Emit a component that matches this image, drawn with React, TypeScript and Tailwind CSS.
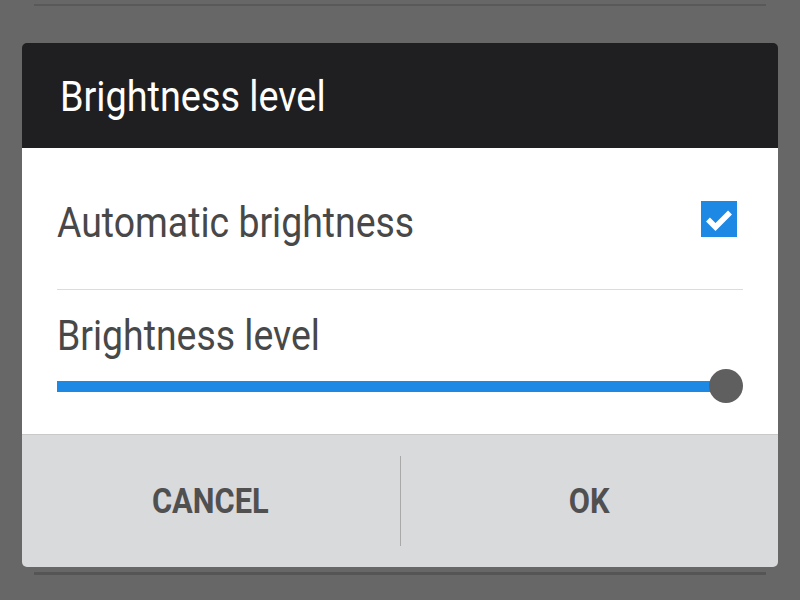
import React from "react";

export default function App() {
  return (
    <div className="w-[800px] h-[600px] bg-[#676767] relative overflow-hidden" style={{ fontFamily: "Roboto, 'Liberation Sans', sans-serif" }}>
      <div className="absolute left-[34px] right-[34px] top-[4px] h-[2px] bg-[#595959]" />
      <div className="absolute left-[34px] right-[34px] top-[572px] h-[3px] bg-[#555555]" />
      <div className="pt-[43px] px-[22px]">
        <div className="rounded-[5px] overflow-hidden flex flex-col">
          <div className="h-[105px] bg-[#1f1f21] flex items-center pl-[38px]">
            <span className="text-white text-[42px] leading-none origin-left scale-x-[0.9] inline-block pt-[2px]">Brightness level</span>
          </div>
          <div className="bg-white h-[286px] flex flex-col px-[35px]">
            <div className="h-[142px] flex items-center justify-between border-b border-[#dcdcdc]">
              <span className="text-[#484848] text-[43px] leading-none origin-left scale-x-[0.87] inline-block pt-[8px]">Automatic brightness</span>
              <div className="w-[36px] h-[36px] bg-[#1e88e5] mr-[6px]">
                <svg width="36" height="36" viewBox="0 0 36 36">
                  <path d="M7 18.5 L14.5 26 L29 11.5" stroke="white" strokeWidth="5.5" fill="none" strokeLinecap="butt" />
                </svg>
              </div>
            </div>
            <div className="pt-[24px]">
              <span className="text-[#484848] text-[43px] leading-none origin-left scale-x-[0.87] inline-block">Brightness level</span>
            </div>
            <div className="relative mt-[12px] h-[34px] flex items-center">
              <div className="h-[11px] bg-[#1e88e5] w-full mr-[18px]" />
              <div className="absolute right-[0px] top-0 w-[34px] h-[34px] rounded-full bg-[#5f5f5f]" />
            </div>
          </div>
          <div className="bg-[#d9dadc] h-[133px] border-t border-[#c9c9c9] flex items-center">
            <div className="flex-1 flex items-center justify-center">
              <span className="text-[#505050] text-[35px] font-bold leading-none scale-x-[0.88] inline-block">CANCEL</span>
            </div>
            <div className="w-[1px] h-[90px] bg-[#a9a9a9]" />
            <div className="flex-1 flex items-center justify-center">
              <span className="text-[#505050] text-[35px] font-bold leading-none scale-x-[0.88] inline-block">OK</span>
            </div>
          </div>
        </div>
      </div>
    </div>
  );
}
